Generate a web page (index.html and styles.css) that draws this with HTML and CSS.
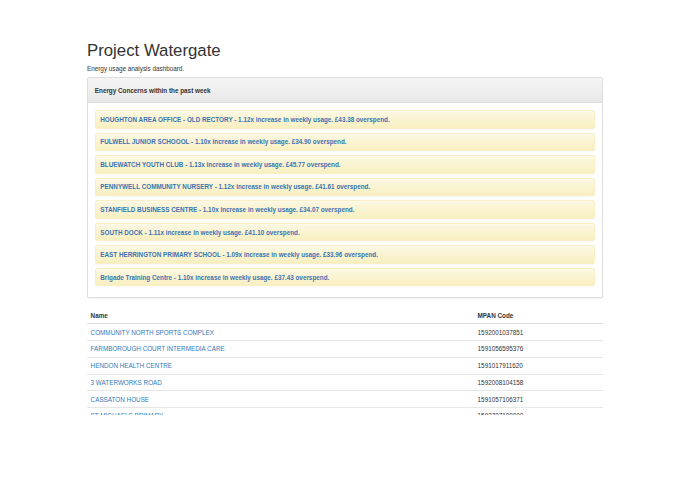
FILE: index.html
```html
<!DOCTYPE html>
<html lang="en">
<head>
<meta charset="utf-8">
<title>Project Watergate</title>
<link rel="stylesheet" href="styles.css">
</head>
<body>
<div class="container">
  <h1 class="title">Project Watergate</h1>
  <p class="lead">Energy usage analysis dashboard.</p>

  <div class="panel">
    <div class="panel-heading"><strong>Energy Concerns within the past week</strong></div>
    <div class="panel-body">
      <div class="alert"><a href="#">HOUGHTON AREA OFFICE - OLD RECTORY - 1.12x increase in weekly usage. £43.38 overspend.</a></div>
      <div class="alert"><a href="#">FULWELL JUNIOR SCHOOOL - 1.10x increase in weekly usage. £34.90 overspend.</a></div>
      <div class="alert"><a href="#">BLUEWATCH YOUTH CLUB - 1.13x increase in weekly usage. £45.77 overspend.</a></div>
      <div class="alert"><a href="#">PENNYWELL COMMUNITY NURSERY - 1.12x increase in weekly usage. £41.61 overspend.</a></div>
      <div class="alert"><a href="#">STANFIELD BUSINESS CENTRE - 1.10x increase in weekly usage. £34.07 overspend.</a></div>
      <div class="alert"><a href="#">SOUTH DOCK - 1.11x increase in weekly usage. £41.10 overspend.</a></div>
      <div class="alert"><a href="#">EAST HERRINGTON PRIMARY SCHOOL - 1.09x increase in weekly usage. £33.96 overspend.</a></div>
      <div class="alert"><a href="#">Brigade Training Centre - 1.10x increase in weekly usage. £37.43 overspend.</a></div>
    </div>
  </div>

  <div class="table-wrap">
    <table class="table">
      <thead>
        <tr><th class="col-name">Name</th><th>MPAN Code</th></tr>
      </thead>
      <tbody>
        <tr><td><a href="#">COMMUNITY NORTH SPORTS COMPLEX</a></td><td>1592001037851</td></tr>
        <tr><td><a href="#">FARMBOROUGH COURT INTERMEDIA CARE</a></td><td>1591056595376</td></tr>
        <tr><td><a href="#">HENDON HEALTH CENTRE</a></td><td>1591017911620</td></tr>
        <tr><td><a href="#">3 WATERWORKS ROAD</a></td><td>1592008104158</td></tr>
        <tr><td><a href="#">CASSATON HOUSE</a></td><td>1591057106371</td></tr>
        <tr><td><a href="#">ST MICHAELS PRIMARY</a></td><td>1592707100000</td></tr>
      </tbody>
    </table>
  </div>
</div>
</body>
</html>
```

FILE: styles.css
```css
html, body {
  margin: 0;
  padding: 0;
  background: #ffffff;
}

body {
  font-family: "Liberation Sans", Arial, Helvetica, sans-serif;
  font-size: 6.34px;
  line-height: 9.05px;
  color: #333333;
}

a {
  color: #337ab7;
  text-decoration: none;
}

.container {
  width: 516px;
  margin-left: 87px;
}

.title {
  margin: 41.9px 0 3.5px;
  font-size: 16.8px;
  line-height: 18.5px;
  font-weight: normal;
  color: #333333;
}

.lead {
  margin: 0 0 4.1px;
}

.panel {
  border: 1px solid #dddddd;
  border-radius: 2px;
  box-shadow: 0 1px 1px rgba(0, 0, 0, 0.05);
  margin-bottom: 9px;
  background: #ffffff;
}

.panel-heading {
  padding: 7.6px 6.8px;
  border-bottom: 1px solid #dddddd;
  border-radius: 2px 2px 0 0;
  background-image: linear-gradient(to bottom, #f5f5f5 0%, #e8e8e8 100%);
  color: #333333;
}

.panel-body {
  padding: 6.8px 6.8px;
}

.alert {
  padding: 3.8px 4.5px;
  margin-bottom: 3.9px;
  border: 1px solid #f8efc6;
  border-radius: 2px;
  background-image: linear-gradient(to bottom, #fcf8e3 0%, #f8efc0 100%);
  box-shadow: inset 0 1px 0 rgba(255, 255, 255, 0.25), 0 1px 2px rgba(0, 0, 0, 0.03);
}

.alert a {
  font-weight: bold;
  color: #3a73b3;
}

.table-wrap {
  height: 108px;
  overflow: hidden;
}

.table {
  width: 100%;
  border-collapse: collapse;
  border-spacing: 0;
}

.table th {
  text-align: left;
  font-weight: bold;
  padding: 3.6px 3.6px;
  border-bottom: 1px solid #dddddd;
}

.table td {
  padding: 3.35px 3.6px;
  border-top: 1px solid #e6e6e6;
}

.col-name {
  width: 75%;
}
```
